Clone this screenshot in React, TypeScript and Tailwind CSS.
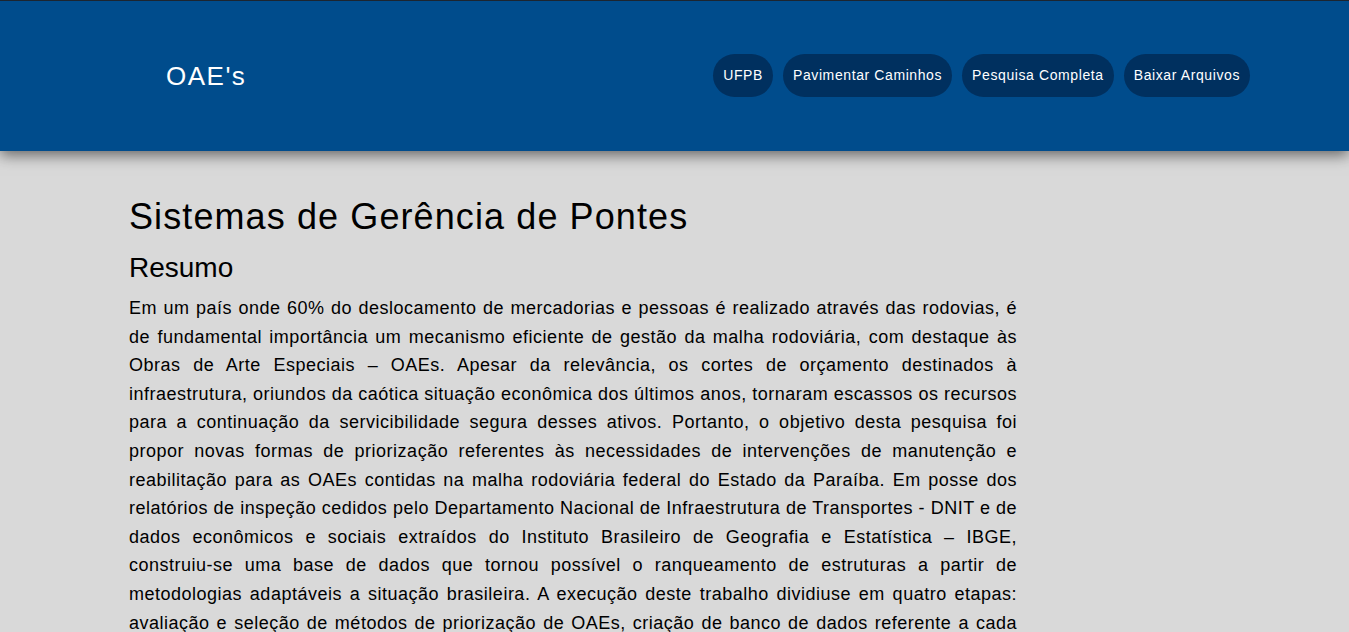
import React from "react";

const paragraph =
  "Em um país onde 60% do deslocamento de mercadorias e pessoas é realizado através das rodovias, é de fundamental importância um mecanismo eficiente de gestão da malha rodoviária, com destaque às Obras de Arte Especiais – OAEs. Apesar da relevância, os cortes de orçamento destinados à infraestrutura, oriundos da caótica situação econômica dos últimos anos, tornaram escassos os recursos para a continuação da servicibilidade segura desses ativos. Portanto, o objetivo desta pesquisa foi propor novas formas de priorização referentes às necessidades de intervenções de manutenção e reabilitação para as OAEs contidas na malha rodoviária federal do Estado da Paraíba. Em posse dos relatórios de inspeção cedidos pelo Departamento Nacional de Infraestrutura de Transportes - DNIT e de dados econômicos e sociais extraídos do Instituto Brasileiro de Geografia e Estatística – IBGE, construiu-se uma base de dados que tornou possível o ranqueamento de estruturas a partir de metodologias adaptáveis a situação brasileira. A execução deste trabalho dividiuse em quatro etapas: avaliação e seleção de métodos de priorização de OAEs, criação de banco de dados referente a cada estrutura, aplicação dos métodos selecionados e análise comparativa dos resultados obtidos. Os resultados demonstraram a viabilidade da aplicação das metodologias propostas.";

export default function App() {
  const links = ["UFPB", "Pavimentar Caminhos", "Pesquisa Completa", "Baixar Arquivos"];
  return (
    <div
      className="min-h-screen bg-[#d9d9d9] text-black"
      style={{ fontFamily: '"Liberation Sans", Arial, sans-serif' }}
    >
      <header className="relative z-10 h-[151px] border-t border-[#1c2530] bg-[#004c8c] shadow-[0_4px_14px_rgba(0,0,0,0.55)]">
        <div className="flex h-full items-center justify-between pl-[166px] pr-[99px] pb-[1px]">
          <div className="text-[26px] leading-none tracking-[1.5px] text-white">OAE's</div>
          <nav className="flex gap-[10px]">
            {links.map((l) => (
              <a
                key={l}
                href="#"
                className="flex h-[43px] items-center rounded-[22px] bg-[#00305f] px-[10px] text-[14px] tracking-[0.6px] text-white"
              >
                {l}
              </a>
            ))}
          </nav>
        </div>
      </header>
      <main className="pl-[129px] pt-[45px]">
        <div className="w-[888px]">
          <h1 className="text-[36px] leading-[42px] tracking-[1.1px]">Sistemas de Gerência de Pontes</h1>
          <h2 className="mt-[12px] text-[28px] leading-[35px]">Resumo</h2>
          <p className="mt-[9px] text-justify text-[18px] leading-[28.6px] tracking-[0.5px]">{paragraph}</p>
        </div>
      </main>
    </div>
  );
}
